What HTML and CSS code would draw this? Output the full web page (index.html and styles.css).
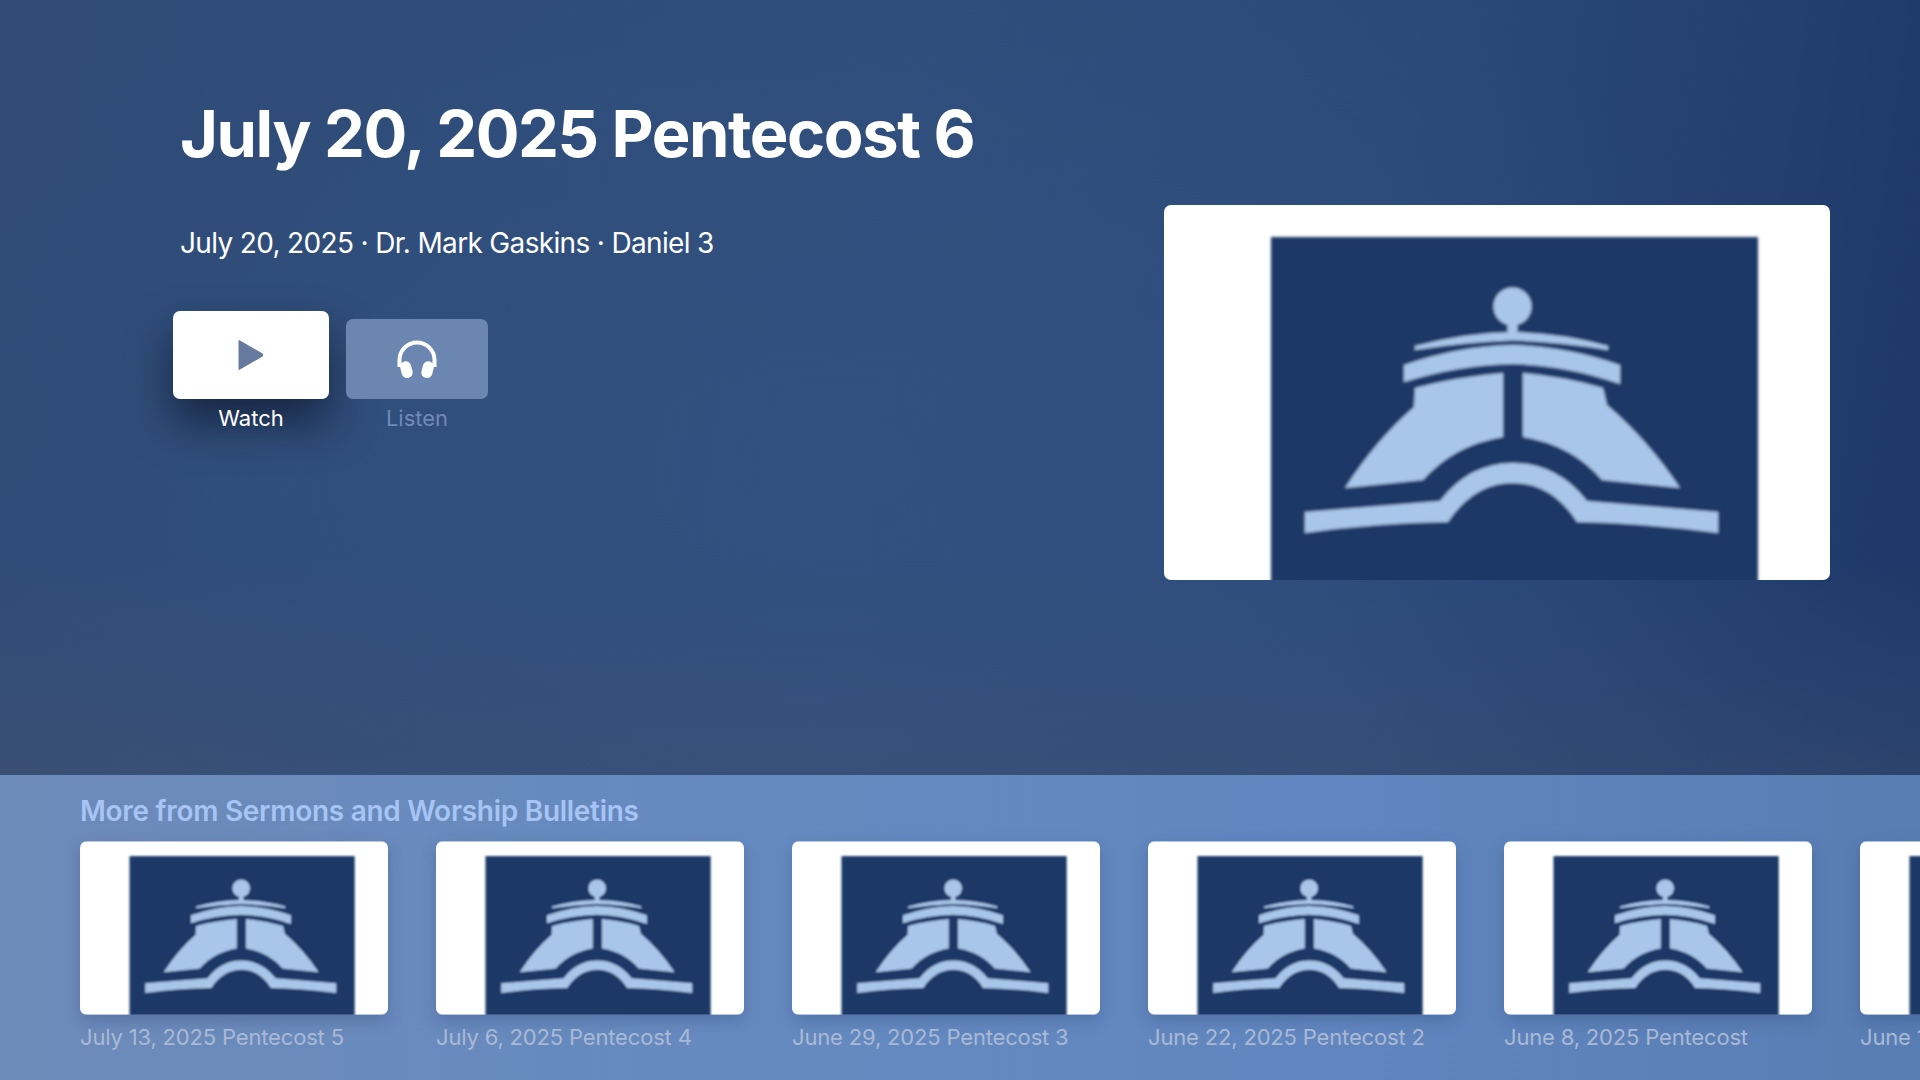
FILE: index.html
```html
<!DOCTYPE html>
<html lang="en">
<head>
<meta charset="utf-8">
<title>July 20, 2025 Pentecost 6</title>
<link rel="stylesheet" href="styles.css">
</head>
<body>
<svg class="sprite" aria-hidden="true">
  <defs>
    <filter id="soft" x="-5%" y="-5%" width="110%" height="110%"><feGaussianBlur stdDeviation="1.8"/></filter>
    <symbol id="art" viewBox="0 0 666 375">
      <rect width="666" height="375" fill="#fff"/>
      <g filter="url(#soft)">
        <rect x="107" y="32" width="487" height="360" fill="#1c3866"/>
        <g fill="#a7c6e9">
          <circle cx="348.5" cy="101.5" r="19"/>
          <rect x="343.5" y="115" width="10" height="16"/>
          <path d="M251 141Q300 128 348 127Q398 128 444 141L444 145Q398 137 348 135.5Q300 137 251 145Z"/>
          <path d="M240 160Q295 141 348 140Q402 141 456 160L456 179Q402 160 348 159Q295 160 240 177Z"/>
          <path d="M339 168L339 232Q290 240 259 275L181 283Q212 235 250 202L251 183Q292 172 339 168Z"/>
          <path d="M359 168L359 232Q408 240 438 275L516 283Q484 235 443 200L439 183Q402 172 359 168Z"/>
          <path d="M141 307L276 296Q305 258 349 258Q393 258 423 296L554 307L554 328Q480 318 413 317Q388 278 349 278Q310 278 284 317Q210 318 141 328Z"/>
        </g>
      </g>
    </symbol>
  </defs>
</svg>

<main class="hero">
  <div class="info">
    <h1 class="title">July 20, 2025 Pentecost 6</h1>
    <p class="meta">July 20, 2025 · Dr. Mark Gaskins · Daniel 3</p>
    <div class="actions">
      <div class="action">
        <div class="btn btn-watch">
          <svg class="play" viewBox="0 0 26 32"><path d="M2 1.5L24.5 14.5Q26 16 24.5 17.5L2 30.5Q0.5 31.5 0.5 30V2Q0.5 0.5 2 1.5Z"/></svg>
        </div>
        <span class="label label-on">Watch</span>
      </div>
      <div class="action">
        <div class="btn btn-listen">
          <svg class="phones" viewBox="0 0 40 38">
            <path class="band" d="M2.5 27V20A17.5 17.5 0 0 1 37.500 20V27"/>
            <rect class="cup" x="4" y="21" width="11" height="17" rx="5.4" transform="rotate(-14 10 30)"/>
            <rect class="cup" x="25" y="21" width="11" height="17" rx="5.4" transform="rotate(14 30 30)"/>
          </svg>
        </div>
        <span class="label label-off">Listen</span>
      </div>
    </div>
  </div>
  <div class="poster"><svg class="art" viewBox="0 0 666 375"><use href="#art"/></svg></div>
</main>

<section class="shelf">
  <h2 class="shelf-title">More from Sermons and Worship Bulletins</h2>
  <div class="row">
    <article class="card"><div class="thumb"><svg class="art" viewBox="0 0 666 375"><use href="#art"/></svg></div><p class="caption">July 13, 2025 Pentecost 5</p></article>
    <article class="card"><div class="thumb"><svg class="art" viewBox="0 0 666 375"><use href="#art"/></svg></div><p class="caption">July 6, 2025 Pentecost 4</p></article>
    <article class="card"><div class="thumb"><svg class="art" viewBox="0 0 666 375"><use href="#art"/></svg></div><p class="caption">June 29, 2025 Pentecost 3</p></article>
    <article class="card"><div class="thumb"><svg class="art" viewBox="0 0 666 375"><use href="#art"/></svg></div><p class="caption">June 22, 2025 Pentecost 2</p></article>
    <article class="card"><div class="thumb"><svg class="art" viewBox="0 0 666 375"><use href="#art"/></svg></div><p class="caption">June 8, 2025 Pentecost</p></article>
    <article class="card"><div class="thumb"><svg class="art" viewBox="0 0 666 375"><use href="#art"/></svg></div><p class="caption">June 15, 2025 Trinity</p></article>
  </div>
</section>
</body>
</html>
```

FILE: styles.css
```css
* { box-sizing: border-box; }

html, body {
  margin: 0;
  width: 1920px;
  height: 1080px;
  overflow: hidden;
}

body {
  display: flex;
  flex-direction: column;
  font-family: Inter, "Noto Sans", sans-serif;
  background: #2f4d7c;
}

.sprite {
  position: absolute;
  width: 0;
  height: 0;
}

.hero {
  height: 775px;
  flex: none;
  display: flex;
  justify-content: space-between;
  padding: 0 90px 0 173px;
  background:
    radial-gradient(ellipse 400px 110px at 0% 100%, rgba(72, 80, 105, 0.25), rgba(72, 80, 105, 0) 100%),
    linear-gradient(180deg, rgba(60, 80, 115, 0) 72%, rgba(66, 84, 118, 0.4) 100%),
    radial-gradient(ellipse 1000px 560px at 44% 60%, rgba(52, 86, 134, 0.5), rgba(52, 86, 134, 0) 100%),
    linear-gradient(98deg, #2f4b76 0%, #2f4d7b 45%, #2b4a79 70%, #1d3868 100%);
}

.info {
  padding-top: 94px;
}

.title {
  margin: 0 0 0 7px;
  font-size: 65px;
  line-height: 80px;
  font-weight: 700;
  letter-spacing: -1.45px;
  color: #fff;
  white-space: nowrap;
}

.meta {
  margin: 51px 0 0 7px;
  font-size: 28px;
  line-height: 36px;
  font-weight: 400;
  letter-spacing: -0.66px;
  color: #fff;
  white-space: nowrap;
}

.actions {
  display: flex;
  align-items: flex-end;
  gap: 17px;
  margin-top: 50px;
}

.action {
  display: flex;
  flex-direction: column;
  align-items: center;
}

.btn {
  display: flex;
  align-items: center;
  justify-content: center;
  border-radius: 7px;
}

.btn-watch {
  width: 156px;
  height: 88px;
  background: #fff;
  box-shadow: 0 24px 44px rgba(10, 18, 38, 0.65);
}

.btn-listen {
  width: 142px;
  height: 80px;
  background: #6b86b1;
}

.play {
  width: 26px;
  height: 32px;
  fill: #66799f;
}

.phones {
  width: 40px;
  height: 38px;
}

.band {
  fill: none;
  stroke: #fff;
  stroke-width: 4;
}

.cup {
  fill: #fff;
}

.label {
  margin-top: 5px;
  font-size: 22px;
  line-height: 28px;
  position: relative;
}

.label-on { color: #fff; }
.label-off { color: #6f8ab6; }

.poster {
  width: 666px;
  height: 375px;
  margin-top: 205px;
  border-radius: 7px;
  overflow: hidden;
}

.art {
  display: block;
  width: 100%;
  height: 100%;
}

.shelf {
  flex: 1;
  padding: 19px 0 0 80px;
  overflow: hidden;
  background: linear-gradient(90deg, #6d8bb9 0%, #658ac0 40%, #6186bf 70%, #587db3 100%);
}

.shelf-title {
  margin: 0;
  font-size: 28px;
  line-height: 34px;
  font-weight: 600;
  letter-spacing: -0.28px;
  color: #a6c4f4;
  white-space: nowrap;
}

.row {
  display: flex;
  gap: 48px;
  margin-top: 13px;
  width: 2200px;
}

.card {
  flex: none;
  width: 308px;
}

.thumb {
  height: 174px;
  border-radius: 7px;
  overflow: hidden;
  box-shadow: 0 6px 16px rgba(40, 60, 110, 0.28);
}

.caption {
  margin: 8px 0 0;
  font-size: 22px;
  line-height: 28px;
  letter-spacing: -0.17px;
  color: #a9b9d5;
  white-space: nowrap;
}
```
